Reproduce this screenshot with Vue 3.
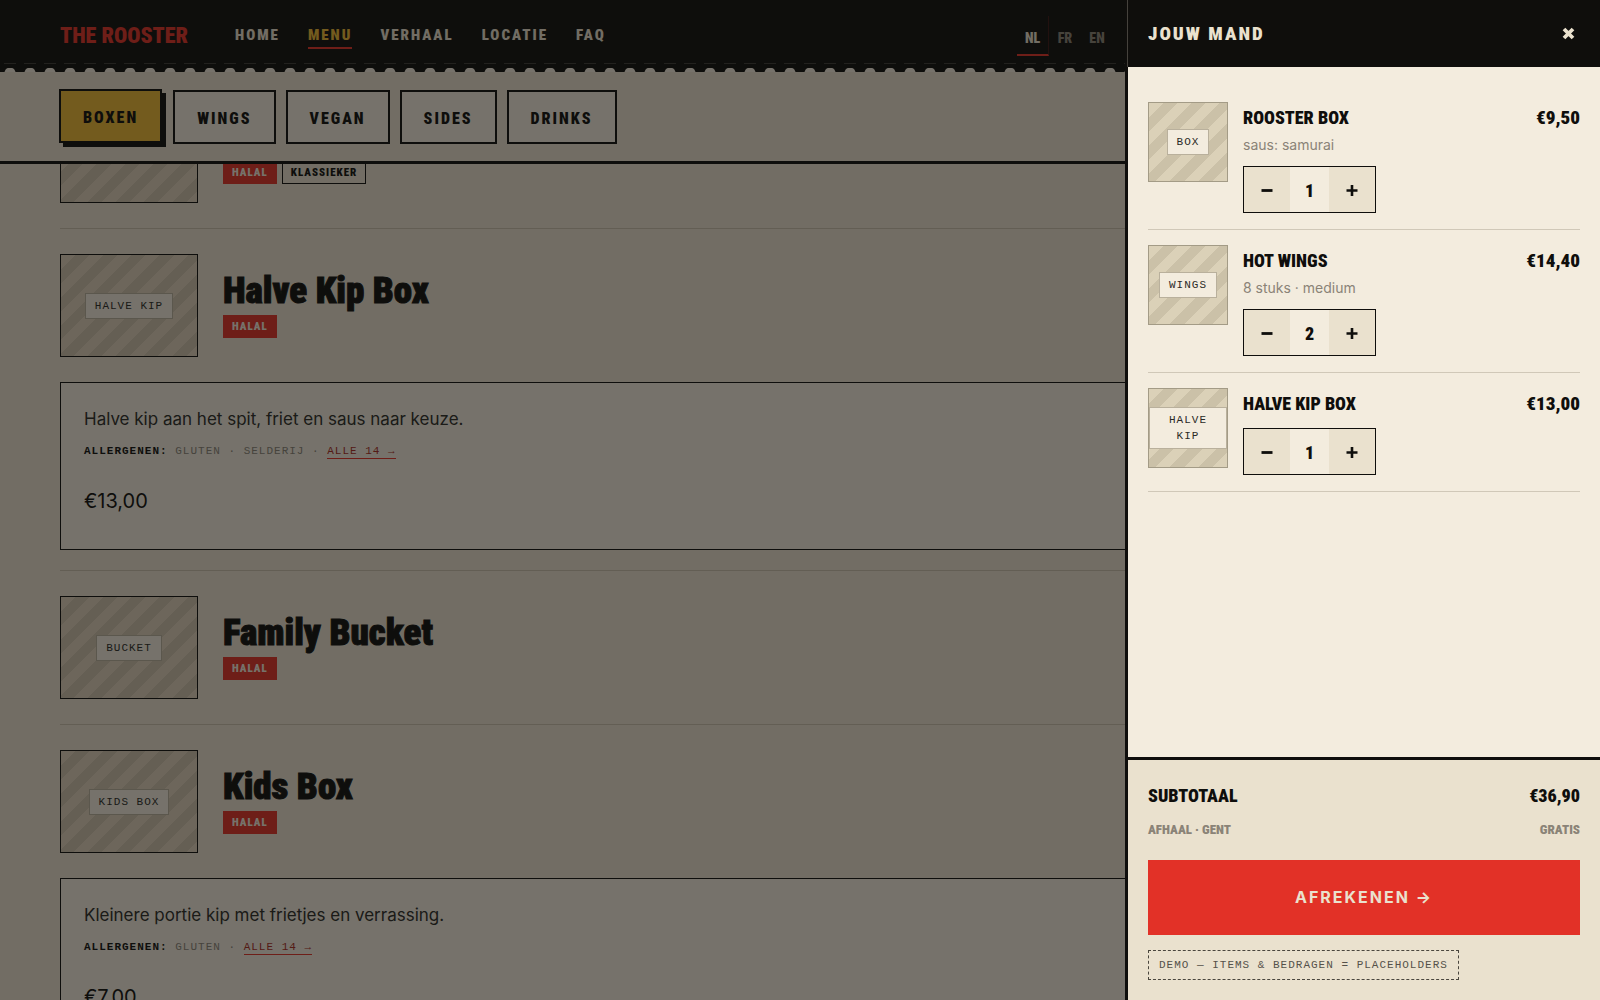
<script setup>
import { ref, computed } from 'vue'

const nav = ['Home', 'Menu', 'Verhaal', 'Locatie', 'FAQ']
const languages = ['NL', 'FR', 'EN']
const categories = ['Boxen', 'Wings', 'Vegan', 'Sides', 'Drinks']
const activeCategory = ref('Boxen')

const dishes = [
  { id: 1, tags: ['Halal', 'Klassieker'] },
  {
    id: 2,
    name: 'Halve Kip Box',
    label: 'Halve kip',
    tags: ['Halal'],
    text: 'Halve kip aan het spit, friet en saus naar keuze.',
    allergens: ['Gluten', 'Selderij'],
    price: 13,
  },
  { id: 3, name: 'Family Bucket', label: 'Bucket', tags: ['Halal'] },
  {
    id: 4,
    name: 'Kids Box',
    label: 'Kids box',
    tags: ['Halal'],
    text: 'Kleinere portie kip met frietjes en verrassing.',
    allergens: ['Gluten'],
    price: 7,
  },
]

const cart = ref([
  { name: 'Rooster Box', label: 'Box', note: 'saus: samurai', price: 9.5, count: 1 },
  { name: 'Hot Wings', label: 'Wings', note: '8 stuks · medium', price: 7.2, count: 2 },
  { name: 'Halve Kip Box', label: 'Halve kip', note: '', price: 13, count: 1 },
])
const open = ref(true)
const subtotal = computed(() => cart.value.reduce((sum, item) => sum + item.price * item.count, 0))
const euro = (value) => '€' + value.toFixed(2).replace('.', ',')
</script>

<template>
  <div class="page">
    <div class="top">
      <header class="site-header">
        <a class="logo" href="#">THE ROOSTER</a>
        <nav class="nav">
          <a v-for="item in nav" :key="item" href="#" :class="{ active: item === 'Menu' }">{{ item }}</a>
        </nav>
        <div class="languages">
          <button v-for="lang in languages" :key="lang" type="button" :class="{ active: lang === 'NL' }">{{ lang }}</button>
        </div>
      </header>
      <div class="filters">
        <button
          v-for="category in categories"
          :key="category"
          type="button"
          :class="{ active: category === activeCategory }"
          @click="activeCategory = category"
        >{{ category }}</button>
      </div>
    </div>

    <div class="scroller">
      <main class="menu">
        <article v-for="dish in dishes" :key="dish.id" class="dish">
          <div class="dish-head">
            <div class="thumb"><span v-if="dish.label">{{ dish.label }}</span></div>
            <div>
              <h2>{{ dish.name }}</h2>
              <div class="tags">
                <span v-for="tag in dish.tags" :key="tag" class="tag" :class="{ halal: tag === 'Halal' }">{{ tag }}</span>
              </div>
            </div>
          </div>
          <div v-if="dish.text" class="details">
            <p class="description">{{ dish.text }}</p>
            <p class="allergens">
              <b>Allergenen:</b> {{ dish.allergens.join(' · ') }} · <a href="#">Alle 14 →</a>
            </p>
            <p class="dish-price">{{ euro(dish.price) }}</p>
          </div>
        </article>
      </main>
    </div>

    <div v-if="open" class="overlay" @click="open = false"></div>

    <aside v-if="open" class="drawer" aria-label="Jouw mand">
      <header class="drawer-head">
        <h2>Jouw mand</h2>
        <button type="button" aria-label="Sluiten" @click="open = false">
          <svg width="13" height="13" viewBox="0 0 13 13" fill="none" stroke="currentColor" stroke-width="3.8">
            <path d="M2 2 11 11M11 2 2 11" />
          </svg>
        </button>
      </header>
      <ul class="cart">
        <li v-for="item in cart" :key="item.name">
          <div class="thumb small"><span>{{ item.label }}</span></div>
          <div class="cart-body">
            <h3>{{ item.name }}</h3>
            <p v-if="item.note">{{ item.note }}</p>
            <div class="stepper">
              <button type="button" aria-label="Minder" @click="item.count = Math.max(1, item.count - 1)">
                <svg width="12" height="12" viewBox="0 0 12 12" stroke="currentColor" stroke-width="2.8"><path d="M0.5 6.5H11.5" /></svg>
              </button>
              <output>{{ item.count }}</output>
              <button type="button" aria-label="Meer" @click="item.count++">
                <svg width="12" height="12" viewBox="0 0 12 12" stroke="currentColor" stroke-width="2.6"><path d="M0.5 6.5H11.5M6 1V12" /></svg>
              </button>
            </div>
          </div>
          <strong class="cart-price">{{ euro(item.price * item.count) }}</strong>
        </li>
      </ul>
      <footer class="drawer-foot">
        <div class="total"><span>Subtotaal</span><span>{{ euro(subtotal) }}</span></div>
        <div class="pickup"><span>Afhaal · Gent</span><span>Gratis</span></div>
        <button type="button" class="checkout">Afrekenen →</button>
        <div class="demo">Demo — items &amp; bedragen = placeholders</div>
      </footer>
    </aside>
  </div>
</template>

<style>
body {
  overflow: hidden;
  background: #eae1ce;
}
</style>

<style scoped>
.page {
  --ink: #0f0e0c;
  --paper: #f3ecde;
  --sand: #eae1ce;
  --red: #e23127;
  --yellow: #eeb833;
  --condensed: "Liberation Sans Narrow", "Roboto Condensed", "DejaVu Sans Condensed", sans-serif;
  --mono: "Liberation Mono", monospace;
  display: flex;
  flex-direction: column;
  height: 100vh;
  color: var(--ink);
  font-family: Inter, sans-serif;
}
.page *,
.page *::after {
  box-sizing: border-box;
}
h2,
h3,
p,
ul {
  margin: 0;
  padding: 0;
}
button {
  font: inherit;
  color: inherit;
  border: 0;
  padding: 0;
  border-radius: 0;
  background: none;
  cursor: pointer;
}
a {
  color: inherit;
  text-decoration: none;
}

/* Top bars */
.top {
  flex: none;
}
.site-header {
  display: flex;
  align-items: center;
  height: 72px;
  padding: 0 60px;
  background:
    radial-gradient(circle at 10px 5px, var(--paper) 5px, transparent 6px) 0 100% / 20px 4px repeat-x,
    repeating-linear-gradient(90deg, transparent 0 4px, #3a3833 4px 16px, transparent 16px 20px) 0 63px / 100% 1px no-repeat,
    var(--ink);
  font-family: var(--condensed);
  font-weight: 900;
}
.logo {
  color: var(--red);
  font-size: 22px;
  line-height: 28px;
  margin-right: 47px;
}
.nav {
  display: flex;
  gap: 28px;
  font-size: 15px;
  line-height: 24px;
  letter-spacing: 2px;
  text-transform: uppercase;
  color: var(--sand);
}
.nav a {
  border-bottom: 2px solid transparent;
}
.nav .active {
  color: var(--yellow);
  border-bottom-color: var(--red);
}
.languages {
  display: flex;
  margin-left: auto;
  margin-right: 427px;
  font-size: 14px;
  letter-spacing: 1px;
  color: #8a8377;
}
.languages button {
  width: 32px;
  height: 40px;
  padding-top: 6px;
  border-bottom: 2px solid transparent;
}
.languages .active {
  color: var(--sand);
  border-bottom-color: var(--red);
  border-right: 1px solid #3a1512;
}
.filters {
  display: flex;
  gap: 10px;
  padding: 18px 60px 17px;
  background: var(--sand);
  border-bottom: 3px solid var(--ink);
}
.filters button {
  height: 54px;
  padding: 2px 22px 0;
  border: 2px solid var(--ink);
  background: var(--paper);
  font-family: var(--condensed);
  font-weight: 900;
  font-size: 16px;
  letter-spacing: 2px;
  text-transform: uppercase;
}
.filters .active {
  background: var(--yellow);
  box-shadow: 4px 4px 0 var(--ink);
  transform: translate(-1px, -1px);
}

/* Menu list, scrolled partly below the bars */
.scroller {
  flex: 1;
  min-height: 0;
  overflow: hidden;
}
.menu {
  margin-top: -89px;
  padding: 0 60px 60px;
}
.dish {
  border-bottom: 1px solid #c9bfab;
}
.dish-head {
  display: flex;
  align-items: center;
  gap: 25px;
  padding: 25px 0;
}
.thumb {
  display: flex;
  align-items: center;
  justify-content: center;
  flex: none;
  width: 138px;
  height: 103px;
  border: 1px solid var(--ink);
  background: repeating-linear-gradient(135deg, #dfd0bb 0 10px, #cfc0ab 10px 20px);
}
.thumb span {
  padding: 4px 9px;
  border: 1px solid #b9b09c;
  background: var(--paper);
  color: #2b2a26;
  font-family: var(--mono);
  font-size: 11px;
  line-height: 16px;
  letter-spacing: 1px;
  text-align: center;
  text-transform: uppercase;
}
.dish h2 {
  min-height: 42px;
  padding-bottom: 6px;
  font-family: var(--condensed);
  font-weight: 900;
  font-size: 37px;
  line-height: 36px;
  -webkit-text-stroke: 1px;
}
.tags {
  display: flex;
  gap: 5px;
}
.tag {
  padding: 0 8px;
  border: 1px solid var(--ink);
  font-family: var(--condensed);
  font-weight: 900;
  font-size: 11px;
  line-height: 21px;
  letter-spacing: 1px;
  text-transform: uppercase;
}
.tag.halal {
  border-color: var(--red);
  background: var(--red);
  color: var(--paper);
}
.details {
  height: 168px;
  margin-bottom: 20px;
  padding: 23px;
  border: 1px solid var(--ink);
  background: var(--paper);
}
.description {
  font-size: 17px;
  line-height: 26px;
  color: #2b2a26;
}
.allergens {
  margin-top: 8px;
  font-family: var(--mono);
  font-size: 11px;
  line-height: 22px;
  letter-spacing: 1px;
  text-transform: uppercase;
  color: #8a8377;
}
.allergens b {
  color: var(--ink);
}
.allergens a {
  color: #a82a22;
  padding-bottom: 1px;
  border-bottom: 1px solid var(--red);
}
.dish-price {
  margin-top: 24px;
  font-size: 20px;
  line-height: 30px;
}

/* Cart drawer */
.overlay {
  position: fixed;
  inset: 0;
  z-index: 3;
  background: rgba(15, 14, 12, 0.55);
}
.drawer {
  position: fixed;
  top: 0;
  right: 0;
  bottom: 0;
  z-index: 4;
  display: flex;
  flex-direction: column;
  width: 475px;
  max-width: 100%;
  border-left: 3px solid var(--ink);
  background: var(--paper);
}
.drawer-head {
  display: flex;
  align-items: center;
  justify-content: space-between;
  height: 67px;
  padding: 0 20px;
  background: var(--ink);
  color: var(--sand);
  box-shadow: -1px 0 0 #45423d;
}
.drawer-head h2 {
  font-family: var(--condensed);
  font-weight: 900;
  font-size: 19px;
  letter-spacing: 2px;
  text-transform: uppercase;
}
.drawer-head button {
  display: grid;
  place-items: center;
  width: 24px;
  height: 24px;
}
.cart {
  flex: 1;
  padding: 20px;
  list-style: none;
  overflow: auto;
}
.cart li {
  display: flex;
  gap: 15px;
  padding: 15px 0 16px;
  border-bottom: 1px solid #d0c8b8;
}
.thumb.small {
  width: 80px;
  height: 80px;
  border-color: #a39b86;
  background: repeating-linear-gradient(135deg, #dbd1b8 0 10px, #cbc1a8 10px 20px);
}
.cart-body {
  flex: 1;
}
.cart h3 {
  font-family: var(--condensed);
  font-weight: 900;
  font-size: 18px;
  line-height: 32px;
  text-transform: uppercase;
}
.cart p {
  margin-bottom: 2px;
  font-size: 14px;
  line-height: 22px;
  color: #8a8377;
}
.stepper {
  display: inline-flex;
  align-items: stretch;
  height: 47px;
  margin-top: 8px;
  border: 1px solid var(--ink);
  vertical-align: top;
}
.stepper button {
  display: grid;
  place-items: center;
  width: 46px;
  background: var(--sand);
}
.stepper output {
  width: 39px;
  line-height: 47px;
  text-align: center;
  font-family: var(--condensed);
  font-weight: 900;
  font-size: 18px;
}
.cart-price {
  font-family: var(--condensed);
  font-weight: 900;
  font-size: 19px;
  line-height: 32px;
}
.drawer-foot {
  padding: 20px;
  border-top: 3px solid var(--ink);
  background: var(--sand);
}
.total,
.pickup {
  display: flex;
  justify-content: space-between;
  font-family: var(--condensed);
  font-weight: 900;
  text-transform: uppercase;
}
.total {
  font-size: 18px;
  line-height: 32px;
}
.pickup {
  margin-top: 8px;
  font-size: 13px;
  line-height: 20px;
  color: #8a8377;
}
.checkout {
  display: block;
  width: 100%;
  height: 75px;
  margin: 20px 0 15px;
  padding-bottom: 2px;
  background: var(--red);
  color: var(--sand);
  font-weight: 700;
  font-size: 16px;
  letter-spacing: 2px;
  text-transform: uppercase;
}
.demo {
  width: fit-content;
  padding: 0 10px;
  border: 1px dashed #4a463e;
  color: #55514a;
  font-family: var(--mono);
  font-size: 11px;
  line-height: 28px;
  letter-spacing: 1px;
  text-transform: uppercase;
}
</style>
